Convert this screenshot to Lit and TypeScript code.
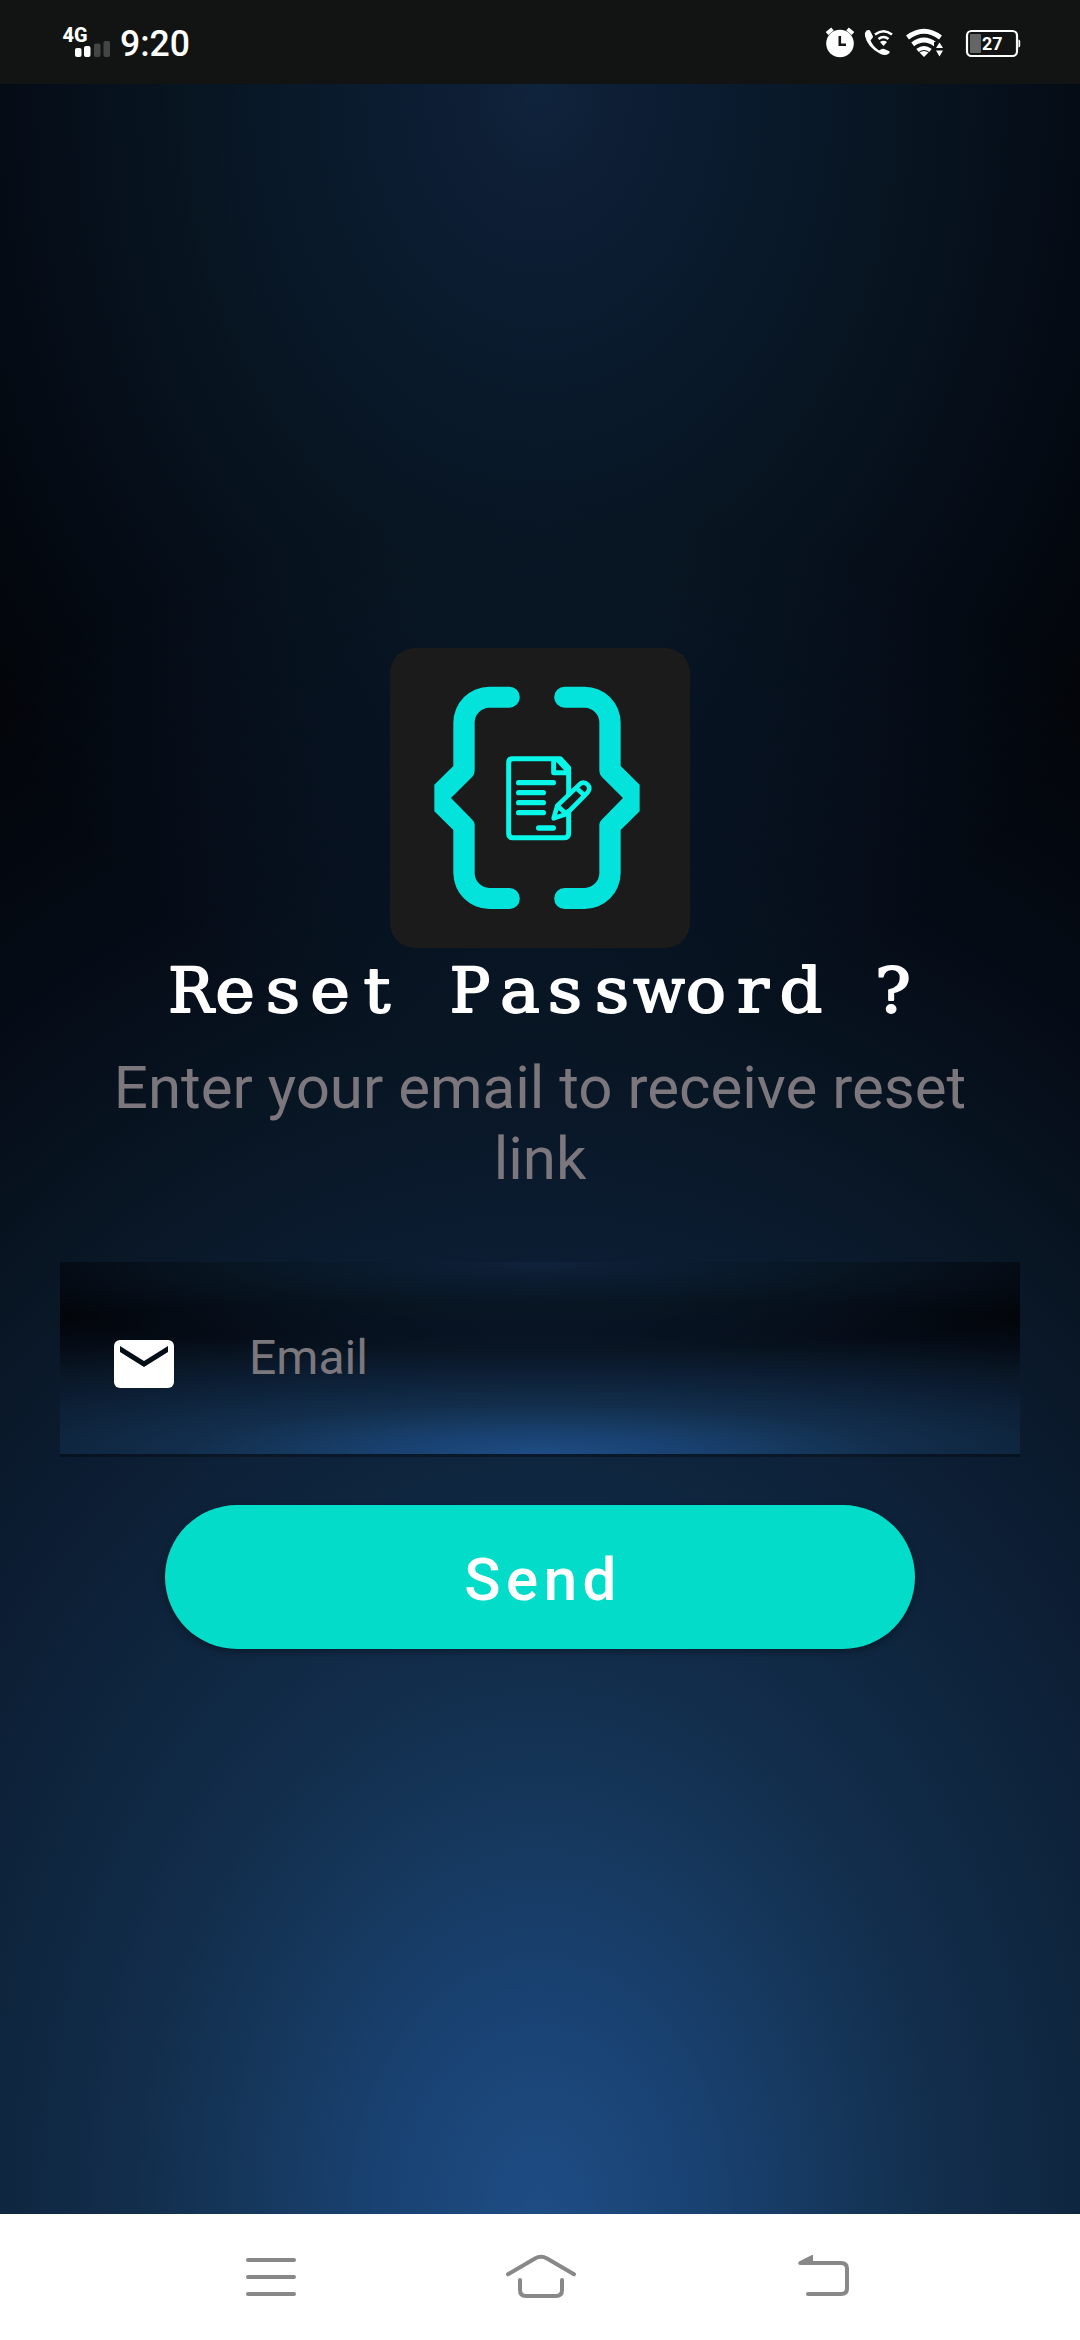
import { LitElement, html, css, svg } from "lit";
import { customElement } from "lit/decorators.js";

const backdrop = css`
  background-color: #010204;
  background-image: radial-gradient(
      ellipse 116% 80% at 50% 100%,
      #1d4b82 0%,
      #18406f 13%,
      #143456 25%,
      #112b48 33%,
      #0d233a 45%,
      #0b1b2f 56%,
      #07131f 69%,
      #040a13 81%,
      #010204 100%
    ),
    radial-gradient(
      ellipse 66% 46% at 50% 0%,
      #0e2037 0%,
      #0b1b2e 11%,
      #081727 27%,
      #051018 54%,
      #030910 72%,
      #000 100%
    );
  background-blend-mode: screen, screen;
`;

@customElement("status-bar")
class StatusBar extends LitElement {
  static styles = css`
    :host {
      display: flex;
      height: 84px;
      background: #111413;
      color: #fff;
      font-family: Roboto, sans-serif;
      justify-content: space-between;
    }
    svg {
      display: block;
    }
    text {
      fill: #fff;
      font-family: Roboto, sans-serif;
    }
    .net {
      font-size: 20.5px;
      font-weight: 800;
    }
    .time {
      font-size: 36.5px;
      font-weight: 500;
    }
    .level {
      font-size: 19px;
      font-weight: 700;
    }
  `;
  render() {
    return html`
      <svg width="240" height="84" viewBox="0 0 240 84" fill="#fff">
        <text class="net" x="62.500" y="42" textLength="25" lengthAdjust="spacingAndGlyphs">4G</text>
        <rect x="75" y="48" width="6.500" height="9" rx="2" />
        <rect x="84" y="46" width="6.500" height="11" rx="2" />
        <rect x="94" y="43.500" width="6.500" height="13.500" rx="2" fill="#444645" />
        <rect x="103.500" y="41" width="6.500" height="16" rx="2" fill="#444645" />
        <text class="time" x="120" y="56" textLength="70" lengthAdjust="spacingAndGlyphs">9:20</text>
      </svg>
      <svg width="280" height="84" viewBox="800 0 280 84" fill="#fff">
        <circle cx="840" cy="43.500" r="13.800" />
        <path d="M827 33.500l5.500-4.500M853 33.500l-5.500-4.500" stroke="#fff" stroke-width="4" />
        <path d="M839.800 36v8.700h6.200" fill="none" stroke="#111413" stroke-width="2.600" />
        <path d="M866.500 30.500q2.500-1 3.500 0l3 6q.3 1.300-2.500 3.800q2 5.700 8.500 10.200q3.200-2.200 4.500-1.700l5.500 2.200q1.500 1-.5 2.700q-3 2.300-8 .3q-13-6.500-15.500-18q-.4-4 1.500-5.500z" />
        <g fill="none" stroke="#fff" stroke-width="2.600">
          <path d="M875 34.500q8.500-6.500 17 0M878.500 39q5-4 10 0" />
        </g>
        <path d="M880 42q3.500-2.500 7 0l-3.500 4z" />
        <g fill="none" stroke="#fff" stroke-width="4.800">
          <path d="M907.500 37.500q16.500-12.500 33 0M912.700 44.300q11.300-8.600 22.600 0" />
          <path d="M917.500 50.500q6.500-5 13 0" stroke-width="4" />
        </g>
        <path d="M919.500 52.500q4.500-3.200 9 0l-4.500 4.500z" />
        <path d="M934 42h12v16h-12z" fill="#111413" />
        <path d="M939.500 42.500l3.500 5.500h-7zM936 50.500h7l-3.500 6z" />
        <rect x="967" y="31" width="50" height="25" rx="4.500" fill="none" stroke="#fff" stroke-width="2.200" />
        <rect x="970" y="34" width="11" height="19" rx="1" fill="#646665" />
        <path d="M1018.500 39.500q1.700 0 1.700 2v4q0 2-1.700 2z" />
        <text class="level" x="982" y="50.300" textLength="20.500" lengthAdjust="spacingAndGlyphs">27</text>
      </svg>
    `;
  }
}

@customElement("app-logo")
class AppLogo extends LitElement {
  static styles = css`
    :host {
      display: block;
      width: 300px;
      height: 300px;
      border-radius: 25px;
      background: #1b1b1b;
      overflow: hidden;
    }
    svg {
      display: block;
    }
  `;
  render() {
    const brace = svg`<path d="M388 140H328A108 108 0 0 0 220 248V378L163 434V514L220 570V700A108 108 0 0 0 328 807H388A31.500 31.500 0 0 0 388 744H328A45 45 0 0 1 284 700V553Q284 546 277 539L213 474L277 410Q284 402 284 392V248A45 45 0 0 1 328 203H388A31.500 31.500 0 0 0 388 140Z"/>`;
    return html`
      <svg width="300" height="300" viewBox="30 24 900 900" fill="#03e3dc">
        ${brace}
        <g transform="translate(942 0) scale(-1 1)">${brace}</g>
        <g fill="none" stroke="#08f7e9" stroke-width="15" stroke-linecap="round" stroke-linejoin="round">
          <path d="M566 462V384L541 356H398Q386 356 386 368V580Q386 593 398 593H554Q566 593 566 580V514" />
          <path d="M521 358V398H564M532 358L562 390" />
          <path d="M416 428H520M416 458H490M416 488H490M416 518H490M476 564H520" stroke-width="16" />
          <path
            d="M521 535L532 497L598 434C604 426 616 426 623 434C630 441 629 450 623 457L559 522ZM535 500L557 520M590 445L613 466"
            stroke-width="14"
          />
        </g>
      </svg>
    `;
  }
}

@customElement("nav-bar")
class NavBar extends LitElement {
  static styles = css`
    :host {
      display: block;
      height: 126px;
      background: #fff;
    }
    svg {
      display: block;
    }
  `;
  render() {
    return html`
      <svg width="1080" height="126" viewBox="0 2214 1080 126" fill="none" stroke="#888" stroke-width="4" stroke-linecap="round" stroke-linejoin="round">
        <path d="M248 2260H294M248 2277H294M248 2294H294" />
        <path d="M508 2274.300L535 2258.500Q541 2255 547 2258.500L574 2274.300" />
        <path d="M520 2280V2290Q520 2296 526 2296H556Q562 2296 562 2290V2280" />
        <path d="M802 2263H841Q847 2263 847 2268.500V2288.500Q847 2294 841 2294H808" />
        <path d="M800 2265Q797 2264 799 2261.500L812 2255H813V2265Z" fill="#888" stroke="none" />
      </svg>
    `;
  }
}

@customElement("app-root")
class AppRoot extends LitElement {
  static styles = css`
    :host {
      display: flex;
      flex-direction: column;
      height: 2340px;
      width: 1080px;
      font-family: Roboto, sans-serif;
    }
    .page {
      ${backdrop}
      flex: 1;
      display: flex;
      flex-direction: column;
      align-items: center;
      padding-top: 564px;
      box-sizing: border-box;
    }
    .title {
      margin: 0;
      width: 1080px;
      height: 104px;
      font-weight: 400;
    }
    .title svg {
      display: block;
    }
    .title text {
      font-family: "DejaVu Serif", serif;
      font-size: 62px;
      fill: #fff;
      stroke: #fff;
      stroke-width: 1.800px;
      stroke-linejoin: round;
      text-anchor: middle;
    }
    .title .wide {
      font-family: "DejaVu Serif Condensed", "DejaVu Serif", serif;
      font-stretch: condensed;
    }
    .hint {
      margin: 0;
      width: 900px;
      font-size: 60px;
      line-height: 71px;
      color: #7c777c;
      text-align: center;
    }
    .field {
      ${backdrop}
      width: 960px;
      height: 192px;
      box-sizing: border-box;
      margin-top: 68px;
      padding-left: 54px;
      display: flex;
      align-items: center;
      gap: 75px;
      box-shadow: 0 3px 0 rgba(0, 0, 0, 0.3);
    }
    .mail {
      display: block;
      margin-top: 12px;
    }
    .label {
      font-size: 48px;
      line-height: 56px;
      color: #7c777c;
    }
    .send {
      margin-top: 51px;
      width: 750px;
      height: 144px;
      border: 0;
      border-radius: 72px;
      padding: 5px 0 0 6px;
      background: #03dcc9;
      color: #fff;
      font: 500 60px/70px Roboto, sans-serif;
      letter-spacing: 5.400px;
      box-shadow: 0 3px 7px rgba(0, 0, 0, 0.35);
    }
  `;
  render() {
    return html`
      <status-bar></status-bar>
      <main class="page">
        <app-logo></app-logo>
        <h1 class="title">
          <svg width="1080" height="104" viewBox="0 0 1080 104">
            <text
              transform="scale(1.08 1)"
              x="176.900 217.600 262 305.600 349.100 392.600 435.200 481.500 523.100 566.700 610.200 653.700 697.200 741.700 785.200 826.900"
              y="64.500"
            ><tspan class="wide">R</tspan>eset <tspan class="wide">P</tspan>ass<tspan class="wide">w</tspan>ord ?</text>
          </svg>
        </h1>
        <p class="hint">Enter your email to receive reset link</p>
        <div class="field">
          <svg class="mail" width="60" height="48" viewBox="0 0 60 48">
            <rect width="60" height="48" rx="6" fill="#fff" />
            <path d="M6 6L30 21L54 6V12L30 27L6 12Z" fill="#050d17" />
          </svg>
          <span class="label">Email</span>
        </div>
        <button class="send">Send</button>
      </main>
      <nav-bar></nav-bar>
    `;
  }
}
